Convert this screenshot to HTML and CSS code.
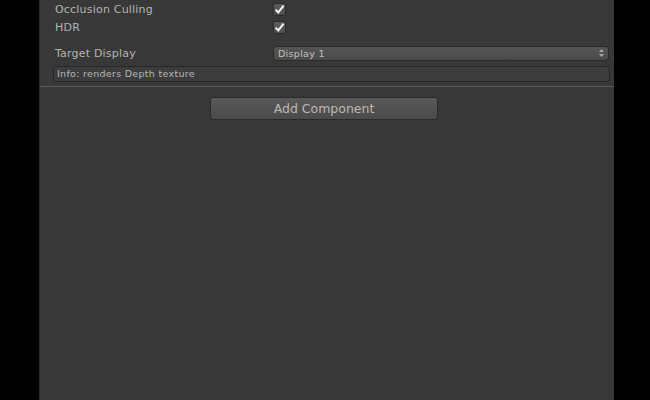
FILE: index.html
```html
<!DOCTYPE html>
<html>
<head>
<meta charset="utf-8">
<link rel="stylesheet" href="styles.css">
</head>
<body>
<div class="screen">
  <div class="inspector">
    <div class="props">
      <div class="row row-top">
        <span class="label">Occlusion Culling</span>
        <span class="check"><svg width="11" height="11" viewBox="0 0 11 11"><path d="M1.6 5.6 L4.3 8.4 L9.6 1.6" fill="none" stroke="#f2f2f2" stroke-width="2"/></svg></span>
      </div>
      <div class="row">
        <span class="label">HDR</span>
        <span class="check"><svg width="11" height="11" viewBox="0 0 11 11"><path d="M1.6 5.6 L4.3 8.4 L9.6 1.6" fill="none" stroke="#f2f2f2" stroke-width="2"/></svg></span>
      </div>
      <div class="row row-display">
        <span class="label">Target Display</span>
        <div class="dropdown">
          <span>Display 1</span>
          <svg class="arrows" width="5" height="8" viewBox="0 0 5 8"><path d="M0 3 L2.5 0 L5 3 Z M0 5 L2.5 8 L5 5 Z" fill="#a8a8a8"/></svg>
        </div>
      </div>
      <div class="info">Info: renders Depth texture</div>
    </div>
    <div class="separator"></div>
    <div class="add-wrap">
      <button class="add-btn">Add Component</button>
    </div>
  </div>
</div>
</body>
</html>
```
FILE: styles.css
```css
html, body {
  margin: 0;
  padding: 0;
  background: #000;
}
.screen {
  width: 650px;
  height: 400px;
  background: #000;
  display: flex;
  overflow: hidden;
}
.inspector {
  margin-left: 39px;
  width: 575px;
  height: 400px;
  background: #383838;
  border-left: 1px solid #2b2b2b;
  box-sizing: border-box;
  font-family: "DejaVu Sans", sans-serif;
  color: #b4b4b4;
}
.props {
  padding: 0 4px 0 13px;
}
.row {
  display: flex;
  align-items: center;
  height: 18px;
}
.label {
  width: 218px;
  font-size: 11px;
  padding-left: 2px;
  letter-spacing: 0.2px;
}
.check {
  width: 13px;
  height: 13px;
  box-sizing: border-box;
  background: linear-gradient(#5c5c5c, #4e4e4e);
  border: 1px solid #2a2a2a;
  border-radius: 2px;
  display: flex;
  align-items: center;
  justify-content: center;
}
.row-display {
  margin-top: 9px;
  height: 16px;
}
.dropdown {
  flex: 1;
  height: 15px;
  box-sizing: border-box;
  margin-right: 1px;
  background: linear-gradient(#555, #4a4a4a);
  border: 1px solid #2a2a2a;
  border-radius: 3px;
  display: flex;
  align-items: center;
  justify-content: space-between;
  padding: 0 4px 0 4px;
  font-size: 9.5px;
  letter-spacing: 0.3px;
  color: #c2c2c2;
}
.arrows {
  display: block;
}
.info {
  margin-top: 5px;
  height: 16px;
  box-sizing: border-box;
  border: 1px solid #262626;
  border-radius: 3px;
  background: #3c3c3c;
  font-size: 9.5px;
  letter-spacing: 0.3px;
  color: #b8b8b8;
  padding-left: 3px;
  line-height: 14px;
}
.separator {
  margin-top: 4px;
  height: 1px;
  background: #5a5a5a;
}
.add-wrap {
  display: flex;
  justify-content: center;
  padding-top: 10px;
  padding-right: 6px;
}
.add-btn {
  width: 228px;
  height: 23px;
  background: linear-gradient(#585858, #4b4b4b);
  border: 1px solid #2a2a2a;
  border-radius: 3px;
  color: #b9b9b9;
  font-family: "DejaVu Sans", sans-serif;
  font-size: 12.5px;
  padding: 0;
  line-height: 20px;
}
```
